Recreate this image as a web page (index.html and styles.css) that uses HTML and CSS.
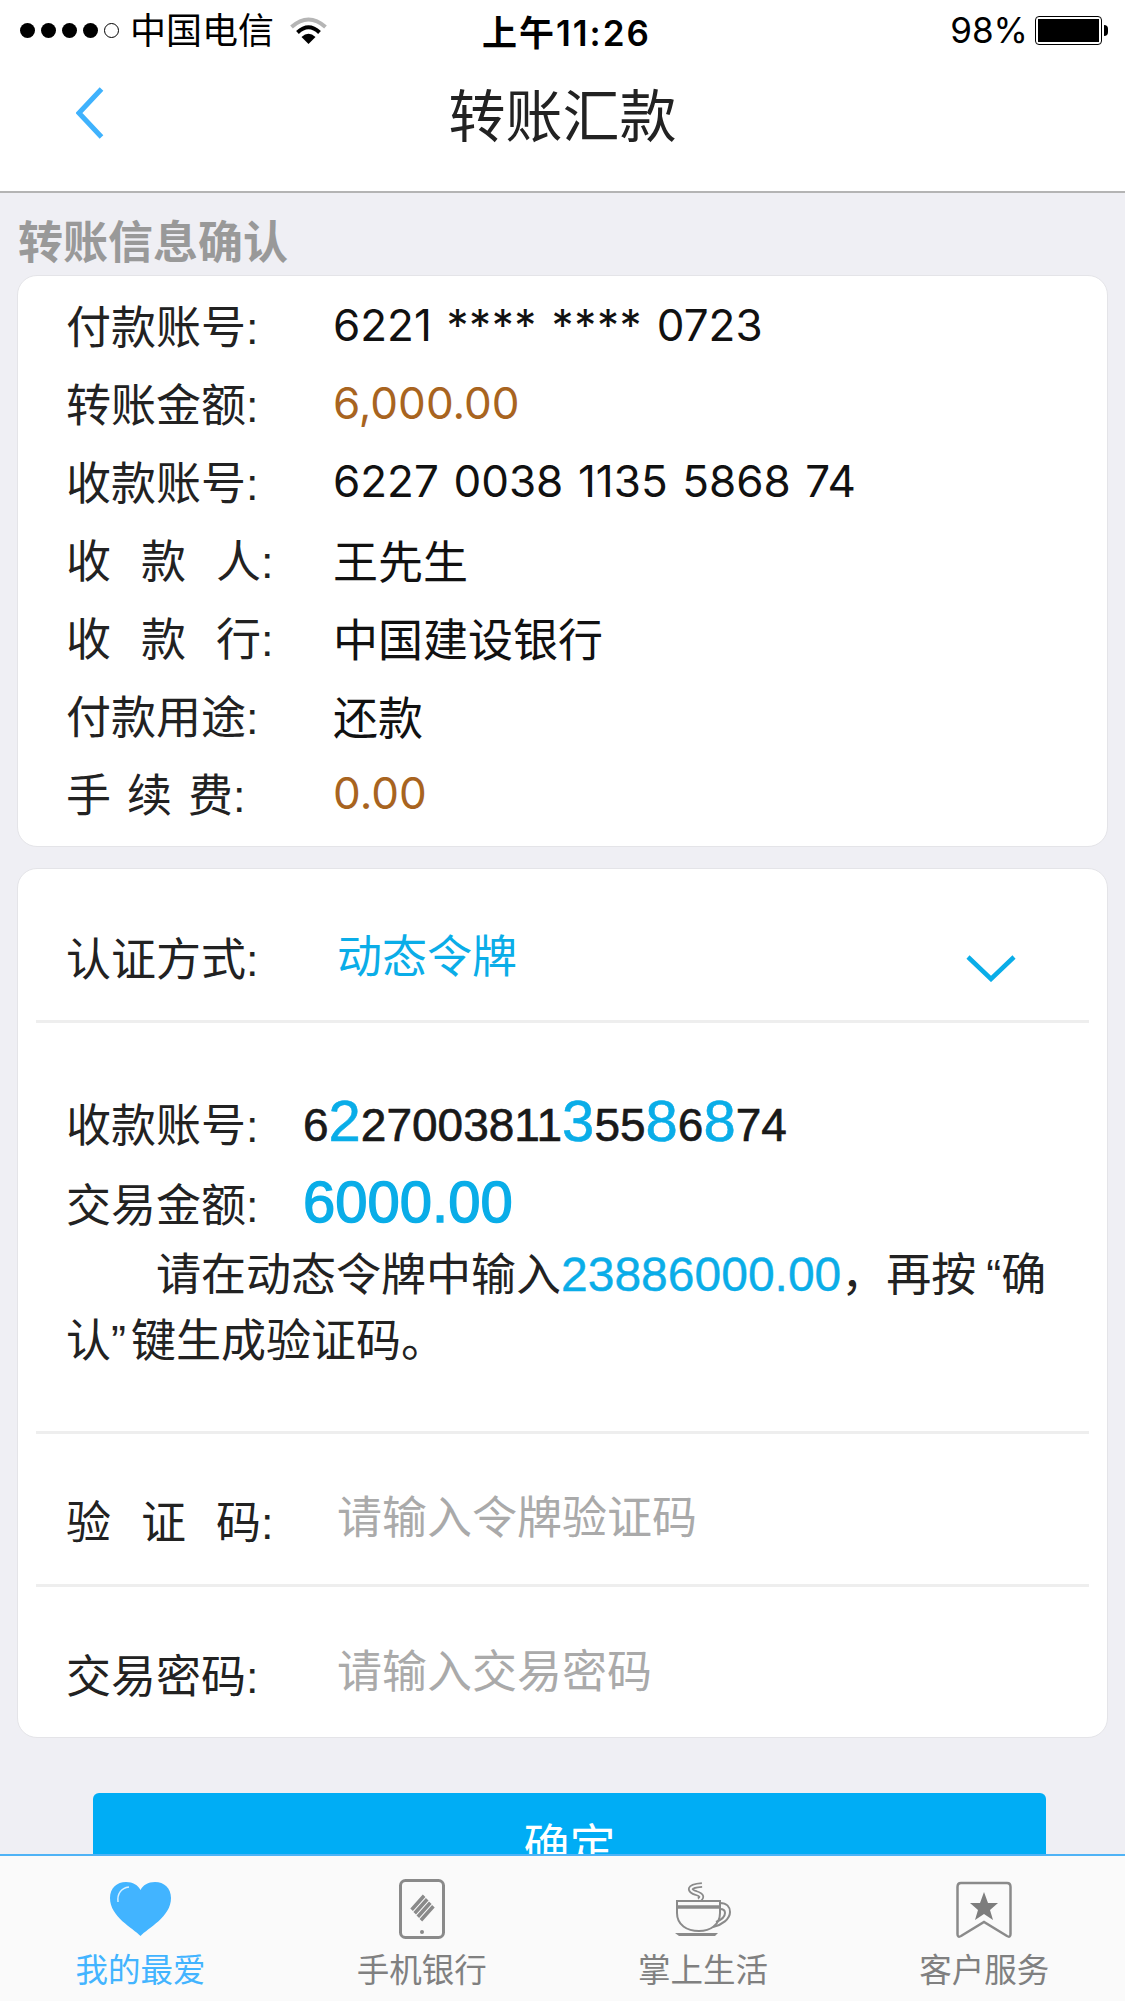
FILE: index.html
```html
<!DOCTYPE html>
<html lang="zh-CN">
<head>
    <meta charset="UTF-8">
    <meta name="viewport" content="width=device-width, initial-scale=1.0">
    <title>转账汇款</title>
    <link rel="stylesheet" href="styles.css">
</head>
<body>
    <header class="top">
        <div class="status">
            <div class="status-left">
                <span class="dots"><i></i><i></i><i></i><i></i><i class="off"></i></span>
                <span class="carrier">中国电信</span>
                <svg class="wifi" width="37" height="27" viewBox="0 0 37 27">
                    <path d="M1.5 10 Q18.500 -5 35.500 10" fill="none" stroke="#b5b5b5" stroke-width="4"/>
                    <path d="M7.500 15.500 Q18.500 5 29.500 15.500" fill="none" stroke="#000" stroke-width="4"/>
                    <path d="M11.500 20 Q18.500 13.500 25.500 20 L18.500 27 Z" fill="#000"/>
                </svg>
            </div>
            <div class="status-time">上午11:26</div>
            <div class="status-right">
                <span>98%</span>
                <span class="battery"><i></i></span>
                <span class="nub"></span>
            </div>
        </div>
        <div class="nav">
            <svg class="back" width="28" height="52" viewBox="0 0 28 52">
                <path d="M25.500 2 L3 26 L25.500 50" fill="none" stroke="#3fb2fd" stroke-width="5"/>
            </svg>
            <h1>转账汇款</h1>
        </div>
    </header>

    <main class="content">
        <h2 class="section-title">转账信息确认</h2>

        <section class="card info">
            <div class="row"><span class="label">付款账号:</span><span class="value">6221 <span class="stars">****</span> <span class="stars">****</span> 0723</span></div>
            <div class="row"><span class="label">转账金额:</span><span class="value money">6,000.00</span></div>
            <div class="row"><span class="label">收款账号:</span><span class="value">6227 0038 1135 5868 74</span></div>
            <div class="row"><span class="label wide">收 款 人:</span><span class="value cn">王先生</span></div>
            <div class="row"><span class="label wide">收 款 行:</span><span class="value cn">中国建设银行</span></div>
            <div class="row"><span class="label">付款用途:</span><span class="value cn">还款</span></div>
            <div class="row"><span class="label mid">手 续 费:</span><span class="value money">0.00</span></div>
        </section>

        <section class="card auth">
            <div class="auth-row method">
                <span class="label">认证方式:</span>
                <span class="value blue">动态令牌</span>
                <svg class="chevron" width="50" height="28" viewBox="0 0 50 28">
                    <path d="M2 3 L25 25 L48 3" fill="none" stroke="#0aade8" stroke-width="4.500"/>
                </svg>
            </div>
            <div class="token">
                <div class="token-line">
                    <span class="label">收款账号:</span>
                    <span class="account">6<b>2</b>27003811<b>3</b>55<b>8</b>6<b>8</b>74</span>
                </div>
                <div class="token-line">
                    <span class="label">交易金额:</span>
                    <span class="amount">6000.00</span>
                </div>
                <p class="hint">请在动态令牌中输入<b>23886000.00</b>，再按<span class="open">“</span>确认<span class="close">”</span>键生成验证码。</p>
            </div>
            <div class="auth-row input-row">
                <span class="label wide">验 证 码:</span>
                <span class="value holder">请输入令牌验证码</span>
            </div>
            <div class="auth-row input-row last">
                <span class="label">交易密码:</span>
                <span class="value holder">请输入交易密码</span>
            </div>
        </section>

        <button class="confirm">确定</button>
    </main>

    <nav class="tabs">
        <div class="tab active">
            <svg width="61" height="60" viewBox="0 0 61 60">
                <path d="M30.500 57 C23 49 0 38 0 19 C0 9 7 3 16 3 C23 3 28 6 30.500 11 C33 6 38 3 45 3 C54 3 61 9 61 19 C61 38 38 49 30.500 57 Z" fill="#42b4ff"/>
                <path d="M8 23 C7 15 11 9 19 8" fill="none" stroke="#d8f0ff" stroke-width="1.500"/>
            </svg>
            <span>我的最爱</span>
        </div>
        <div class="tab">
            <svg width="46" height="60" viewBox="0 0 46 60">
                <rect x="1.500" y="1.500" width="43" height="57" rx="5" fill="none" stroke="#8a8a8a" stroke-width="3"/>
                <path d="M12.600 30.750 L25.100 16.750 M15.700 34.250 L28.200 20.250 M18.800 37.750 L31.300 23.750 M21.900 41.250 L34.400 27.250" fill="none" stroke="#8a8a8a" stroke-width="3.500"/>
                <circle cx="23" cy="53" r="2" fill="#8a8a8a"/>
            </svg>
            <span>手机银行</span>
        </div>
        <div class="tab">
            <svg width="56" height="60" viewBox="0 0 56 60">
                <path d="M27 6 C12 7 14 12 21 14 C27 16 28 18 24 21" fill="none" stroke="#8a8a8a" stroke-width="5.500"/>
                <path d="M27 6 C12 7 14 12 21 14 C27 16 28 18 24 21" fill="none" stroke="#fafafa" stroke-width="2"/>
                <path d="M2 22 H45 V34 C45 46 35 52 24 52 C12 52 2 46 2 34 Z" fill="#fafafa" stroke="#8a8a8a" stroke-width="2"/>
                <path d="M2 28 H45" stroke="#8a8a8a" stroke-width="3.500"/>
                <path d="M45 24 C52 24 55 28 55 33 C55 40 47 46 38 48 M45 30 C49 30 50 32 50 34 C50 38 46 41 41 43" fill="none" stroke="#8a8a8a" stroke-width="2"/>
                <path d="M0 54 H43 L40 57 H4 Z" fill="#8a8a8a"/>
            </svg>
            <span>掌上生活</span>
        </div>
        <div class="tab">
            <svg width="56" height="60" viewBox="0 0 56 60">
                <path d="M1.500 8 Q1.500 4 5 4 H51 Q54.500 4 54.500 8 V55 Q54.500 59 51 57 L28 43 L5 57 Q1.500 59 1.500 55 Z" fill="none" stroke="#8a8a8a" stroke-width="2.500"/>
                <path d="M28 13 L32 24 H42 L34 31 L37 41 L28 35 L19 41 L22 31 L14 24 H24 Z" fill="#7d7d7d"/>
            </svg>
            <span>客户服务</span>
        </div>
    </nav>
</body>
</html>
```

FILE: styles.css
```css
* {
    box-sizing: border-box;
}
html, body {
    margin: 0;
    height: 2001px;
    overflow: hidden;
}
body {
    display: flex;
    flex-direction: column;
    background-color: #efeff4;
    color: #1a1a1a;
    font-family: "Liberation Sans", "Noto Sans CJK SC", sans-serif;
    font-size: 45px;
}

/* header */
.top {
    background-color: #fff;
    border-bottom: 2px solid #b4b4b4;
    height: 193px;
    flex: none;
}
.status {
    display: grid;
    grid-template-columns: 1fr auto 1fr;
    align-items: center;
    height: 60px;
    padding: 0 17px 0 20px;
    color: #000;
    font-size: 36px;
}
.status-left {
    display: flex;
    align-items: center;
}
.dots {
    display: flex;
    gap: 6px;
}
.dots i {
    width: 15px;
    height: 15px;
    border-radius: 50%;
    background-color: #000;
}
.dots i.off {
    background: none;
    border: 1px solid #000;
}
.carrier {
    margin-left: 11px;
    margin-bottom: 4px;
}
.wifi {
    margin-left: 16px;
}
.status-time {
    padding-left: 5px;
    font-family: "Inter", "Noto Sans CJK SC", sans-serif;
    font-size: 35px;
    font-weight: 600;
    letter-spacing: 2px;
}
.status-right {
    display: flex;
    align-items: center;
    justify-content: flex-end;
    font-family: "Inter", sans-serif;
    font-size: 35px;
}
.battery {
    width: 67px;
    height: 29px;
    margin-left: 7px;
    padding: 2px;
    border: 1px solid #000;
    border-radius: 4px;
}
.battery i {
    display: block;
    height: 100%;
    background-color: #000;
}
.nub {
    width: 4px;
    height: 11px;
    margin-left: 2px;
    background-color: #000;
    border-radius: 0 4px 4px 0;
}
.nav {
    position: relative;
    display: flex;
    justify-content: center;
    align-items: center;
    height: 113px;
    padding-bottom: 10px;
}
.nav h1 {
    margin: 0;
    font-size: 57px;
    font-weight: 400;
    color: #222;
}
.back {
    position: absolute;
    left: 76px;
    top: 27px;
}

/* content */
.content {
    flex: 1;
    min-height: 0;
    overflow: hidden;
}
.section-title {
    margin: 0;
    padding-left: 18px;
    height: 82px;
    line-height: 102px;
    font-size: 45px;
    color: #999;
}
.card {
    margin: 0 17px;
    background-color: #fff;
    border: 1px solid #e4e4e8;
    border-radius: 20px;
}
.label {
    flex: none;
    width: 266px;
    color: #222;
    white-space: nowrap;
}
.label.wide {
    word-spacing: 17.500px;
}
.label.mid {
    word-spacing: 3.500px;
}
.value {
    color: #111;
}
.info {
    padding: 9px 0 15px 48px;
}
.row {
    display: flex;
    align-items: center;
    height: 78px;
}
.row .label {
    width: 267px;
}
.info .value {
    padding-top: 2px;
    font-family: "Inter", "Noto Sans CJK SC", sans-serif;
    font-size: 44px;
    word-spacing: 2.200px;
}
.info .value.cn {
    font-size: 45px;
}
.stars {
    letter-spacing: 0.600px;
}
.money {
    color: #a8641f !important;
}

.auth {
    margin-top: 21px;
    height: 870px;
}
.auth-row {
    display: flex;
    align-items: center;
    margin: 0 18px;
    padding-left: 30px;
}
.method {
    position: relative;
    height: 154px;
    padding-top: 24px;
    border-bottom: 3px solid #eeeeee;
}
.blue {
    margin-left: 5px;
    color: #0aade8;
    transform: translateY(-3px);
}
.chevron {
    position: absolute;
    left: 930px;
    top: 85px;
}
.token {
    height: 411px;
    margin: 0 18px;
    padding: 59px 30px 0;
    border-bottom: 3px solid #eeeeee;
}
.token-line {
    display: flex;
    align-items: center;
    height: 80px;
}
.token-line .label {
    width: 237px;
}
.account {
    margin-bottom: 4px;
    font-size: 46px;
    -webkit-text-stroke: 0.600px #111;
}
.account b {
    font-size: 58px;
    font-weight: 400;
    color: #0aade8;
    -webkit-text-stroke: 0.600px #0aade8;
}
.amount {
    margin-bottom: 2px;
    font-size: 58px;
    color: #0aade8;
    -webkit-text-stroke: 1.400px #0aade8;
}
.hint {
    margin: 0;
    text-indent: 90px;
    line-height: 66px;
    color: #222;
}
.hint b {
    font-size: 48px;
    font-weight: 400;
    color: #0aade8;
    -webkit-text-stroke: 0.400px #0aade8;
}
.open {
    margin-left: 10px;
}
.close {
    margin-right: 5px;
}
.input-row {
    height: 153px;
    padding-top: 20px;
    border-bottom: 3px solid #eeeeee;
}
.input-row.last {
    border-bottom: none;
}
.holder {
    margin-left: 5px;
    color: #aaa;
    transform: translateY(-5px);
}
.confirm {
    display: block;
    width: 953px;
    height: 108px;
    margin: 55px 0 0 93px;
    padding: 0 0 10px;
    background-color: #00adf5;
    color: #fff;
    border: none;
    border-radius: 6px;
    font-family: inherit;
    font-size: 46px;
}

/* tab bar */
.tabs {
    flex: none;
    display: grid;
    grid-template-columns: repeat(4, 1fr);
    height: 147px;
    background-color: #fafafa;
    border-top: 2px solid #4fb3f6;
}
.tab {
    display: flex;
    flex-direction: column;
    align-items: center;
    padding-top: 23px;
    color: #808080;
    font-size: 32.500px;
}
.tab span {
    margin-top: 10px;
    line-height: 44px;
}
.tab.active {
    color: #42b4ff;
}
```
